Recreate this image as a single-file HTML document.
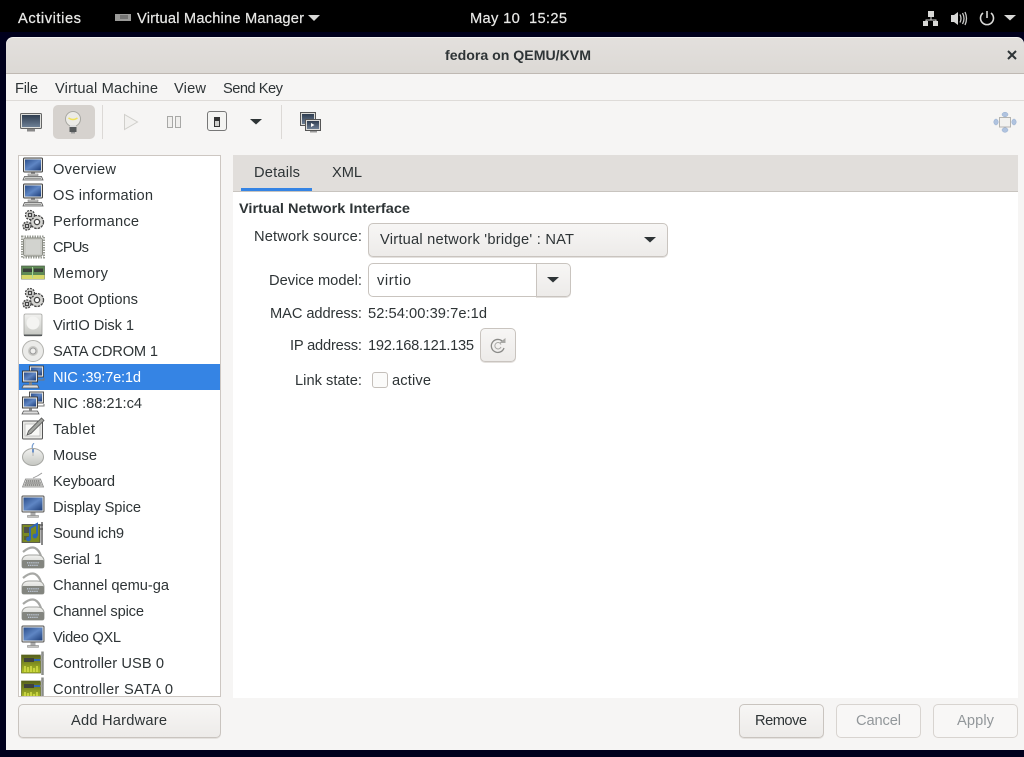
<!DOCTYPE html>
<html><head><meta charset="utf-8"><title>fedora on QEMU/KVM</title>
<style>
html,body{margin:0;padding:0;width:1024px;height:757px;overflow:hidden;background:#00001c}
div{position:absolute;box-sizing:border-box}
.btn{background:linear-gradient(#f7f6f5,#edebe9);border:1px solid #c9c4bf;border-radius:5px;box-shadow:0 1px 0 #e4e1de}
.dis{background:#f8f7f6;border:1px solid #d8d4d0;border-radius:5px}
svg{position:absolute;left:0;top:0}
text{font-family:"Liberation Sans",sans-serif;font-size:14.67px;fill:#2e3436}
</style></head><body>
<div style="left:0;top:0;width:1024px;height:32px;background:#000"></div>
<div style="left:6px;top:37px;width:1018px;height:713px;background:#f6f5f4;border-radius:7px 7px 0 0;border-top:1px solid #f3f2f1"></div>
<div style="left:6px;top:38px;width:1018px;height:36px;background:linear-gradient(#e3e0dd,#dcd9d5);border-bottom:1px solid #bfb9b3;border-radius:7px 7px 0 0"></div>
<div style="left:6px;top:100px;width:1018px;height:1px;background:#dedbd8"></div>
<div style="left:53px;top:105px;width:42px;height:34px;background:#d6d2ce;border-radius:5px"></div>
<div style="left:102px;top:105px;width:1px;height:34px;background:#dcd9d6"></div>
<div style="left:281px;top:105px;width:1px;height:34px;background:#dcd9d6"></div>
<div style="left:18px;top:155px;width:203px;height:542px;background:#fff;border:1px solid #cdc7c2"></div>
<div style="left:19px;top:364px;width:201px;height:26px;background:#3584e4"></div>
<div style="left:233px;top:155px;width:785px;height:543px;background:#fff"></div>
<div style="left:233px;top:155px;width:785px;height:37px;background:#e1dedb;border-bottom:1px solid #c8c4bf"></div>
<div style="left:241px;top:188px;width:71px;height:3px;background:#3584e4"></div>
<div class="btn" style="left:18px;top:704px;width:203px;height:34px"></div>
<div class="btn" style="left:739px;top:704px;width:85px;height:34px"></div>
<div class="dis" style="left:836px;top:704px;width:85px;height:34px"></div>
<div class="dis" style="left:933px;top:704px;width:85px;height:34px"></div>
<div class="btn" style="left:368px;top:223px;width:300px;height:34px"></div>
<div style="left:368px;top:263px;width:169px;height:34px;background:#fff;border:1px solid #c9c4bf;border-radius:5px 0 0 5px"></div>
<div class="btn" style="left:536px;top:263px;width:35px;height:34px;border-radius:0 5px 5px 0"></div>
<div class="btn" style="left:480px;top:328px;width:36px;height:34px"></div>
<div style="left:372px;top:372px;width:16px;height:16px;background:#fbfbfa;border:1px solid #c4bfba;border-radius:3px"></div>

<svg width="1024" height="757" viewBox="0 0 1024 757" xmlns="http://www.w3.org/2000/svg">
<defs>
<linearGradient id="scr" x1="0" y1="0" x2="1" y2="1"><stop offset="0" stop-color="#2c4f8c"/><stop offset=".5" stop-color="#5f86c4"/><stop offset="1" stop-color="#1d3d78"/></linearGradient>
<linearGradient id="gr" x1="0" y1="0" x2="0" y2="1"><stop offset="0" stop-color="#f2f2f0"/><stop offset="1" stop-color="#c4c6c1"/></linearGradient>
<linearGradient id="dk" x1="0" y1="0" x2="0" y2="1"><stop offset="0" stop-color="#2f3d50"/><stop offset="1" stop-color="#6d7f95"/></linearGradient>
<linearGradient id="pcb" x1="0" y1="0" x2="0" y2="1"><stop offset="0" stop-color="#55601c"/><stop offset="1" stop-color="#b3c426"/></linearGradient>
<symbol id="computer" viewBox="0 0 24 24">
<rect x="2.500" y="1" width="19" height="14" rx="1" fill="#dfe0dd" stroke="#444"/>
<rect x="4" y="2.500" width="16" height="11" fill="url(#scr)"/>
<rect x="10" y="15.500" width="4" height="2" fill="#999"/><rect x="7" y="17" width="10" height="1.500" fill="#d5d5d2" stroke="#666" stroke-width=".5"/>
<path d="M2 23l1.500-3.500h17l1.500 3.500z" fill="#dedfdc" stroke="#555" stroke-width=".8"/>
<path d="M4 21.300h16" stroke="#888"/>
</symbol>
<symbol id="gears" viewBox="0 0 24 24">
<g fill="#d6d6d3" stroke="#444" stroke-width="1.300">
<circle cx="16" cy="13" r="6.500" stroke-dasharray="2.500 1"/><circle cx="16" cy="13" r="2.600" fill="#fff"/>
<circle cx="9" cy="6" r="4.500" stroke-dasharray="2 1"/><rect x="7.500" y="4.500" width="3" height="3" fill="#fff"/>
<circle cx="6" cy="17" r="4" stroke-dasharray="2 1"/><rect x="4.500" y="15.500" width="3" height="3" fill="#fff"/>
</g></symbol>
<symbol id="cpu" viewBox="0 0 24 24">
<rect x="1" y="1.500" width="22" height="21" fill="none" stroke="#9a9c94" stroke-width="2" stroke-dasharray="1.500 1"/>
<rect x="2.500" y="3" width="19" height="18" rx="2" fill="#c9cac5" stroke="#8a8c84"/>
<rect x="5" y="5" width="14" height="14" fill="#d2d3cf"/>
</symbol>
<symbol id="mem" viewBox="0 0 24 24">
<rect x=".5" y="5" width="23" height="13" fill="#5f8a55" stroke="#4a5a48" stroke-width=".7"/>
<rect x="2" y="7.500" width="9" height="3.500" fill="#3b3f3a"/><rect x="13" y="7.500" width="9" height="3.500" fill="#3b3f3a"/>
<rect x=".5" y="14" width="23" height="4" fill="#d8d86a"/>
<path d="M11.500 6v11" stroke="#a9d89a"/>
</symbol>
<symbol id="disk" viewBox="0 0 24 24">
<rect x="3" y="1" width="18" height="22" rx="1.500" fill="url(#gr)" stroke="#a5a5a1" stroke-width=".8"/>
<ellipse cx="12" cy="10" rx="6.500" ry="6.500" fill="#f4f4f2"/><rect x="3" y="21.500" width="18" height="1.500" fill="#55585a"/>
</symbol>
<symbol id="cd" viewBox="0 0 24 24">
<circle cx="12" cy="12" r="10.500" fill="#ebebe9" stroke="#b2b2ae"/>
<circle cx="12" cy="12" r="5" fill="#c9c9c5"/><circle cx="12" cy="12" r="3" fill="#efefed" stroke="#999"/>
</symbol>
<symbol id="nic" viewBox="0 0 24 24">
<rect x="8.500" y="1" width="14" height="11" fill="#e6e6e3" stroke="#444" stroke-width=".9"/><rect x="10" y="2.500" width="11" height="8" fill="url(#scr)"/>
<rect x="1.500" y="6" width="15" height="11" fill="#e6e6e3" stroke="#333" stroke-width=".9"/><rect x="3" y="7.500" width="12" height="8" fill="url(#scr)"/>
<path d="M1 23l1.500-3h14l1.500 3z" fill="#ddd" stroke="#555" stroke-width=".8"/><rect x="8" y="17.300" width="3" height="2.500" fill="#888"/>
<path d="M17 15h6v-2" fill="none" stroke="#777"/>
</symbol>
<symbol id="tablet" viewBox="0 0 24 24">
<rect x="1.500" y="4" width="20" height="18" rx="1" fill="#e9e9e6" stroke="#555"/>
<rect x="4" y="7" width="15" height="12" fill="#f8f8f6" stroke="#aaa" stroke-width=".6"/>
<path d="M6 18l1.500-4 13-13 2.500 2.500-13 13z" fill="#a2a4a0" stroke="#555" stroke-width=".8"/>
</symbol>
<symbol id="mouse" viewBox="0 0 24 24">
<path d="M13 0q-3 3-1 7" fill="none" stroke="#7a9fd0" stroke-width="1.200"/>
<ellipse cx="12" cy="14" rx="10.500" ry="8.500" fill="url(#gr)" stroke="#a5a6a2"/>
<path d="M12 6v7" stroke="#b5b5b1"/><rect x="11" y="6" width="2" height="3.500" fill="#6d93c9"/>
</symbol>
<symbol id="kbd" viewBox="0 0 24 24">
<path d="M21 4q-4 3-9 5" fill="none" stroke="#999" stroke-width=".9"/>
<path d="M1.500 18l3-8h15l3 8z" fill="#d6d6d3" stroke="#888" stroke-width=".8"/>
<path d="M5 12h14M4.300 14h15.400M3.600 16h16.800" stroke="#666" stroke-width="1.300" stroke-dasharray="1.500 .5"/>
</symbol>
<symbol id="disp" viewBox="0 0 24 24">
<rect x="1" y="1" width="22" height="16" rx="1" fill="#e2e3e0" stroke="#555"/>
<rect x="2.500" y="2.500" width="19" height="13" fill="url(#scr)"/>
<rect x="9.500" y="17.500" width="5" height="3" fill="#aaa"/><rect x="6.500" y="20.500" width="11" height="1.800" fill="#c3c3c0" stroke="#777" stroke-width=".5"/>
</symbol>
<symbol id="sound" viewBox="0 0 24 24">
<rect x="1" y="3.500" width="18" height="18" fill="#7b8a22" stroke="#444" stroke-width=".8"/>
<rect x="3" y="6" width="6" height="6" fill="#4e524c"/><rect x="3" y="15" width="5" height="4" fill="#5c6030"/>
<path d="M9 18V7l7-4v12" fill="none" stroke="#2f66b8" stroke-width="2"/><circle cx="7.500" cy="18" r="2.400" fill="#2f66b8"/><circle cx="14" cy="15" r="2.400" fill="#2f66b8"/>
<path d="M21 1v23" stroke="#888" stroke-width="2"/><path d="M19 4h3M19 8h3" stroke="#444"/>
</symbol>
<symbol id="serial" viewBox="0 0 24 24">
<path d="M2 6Q9 0 14 2q4 2 6 8" fill="none" stroke="#a7a8a5" stroke-width="2.200"/>
<path d="M1 14q1-5 7-5h8q6 0 7 5v6q0 2-2 2H3q-2 0-2-2z" fill="url(#gr)" stroke="#a2a39f"/>
<rect x="1" y="14" width="22" height="8" rx="1.500" fill="#83857f"/>
<path d="M6 16.800h12M7 19.300h10" stroke="#c5d0e2" stroke-width="1.200" stroke-dasharray="1.300 .8"/>
</symbol>
<symbol id="ctrl" viewBox="0 0 24 24">
<rect x=".5" y="4" width="19" height="18" fill="url(#pcb)" stroke="#5c6422" stroke-width=".7"/>
<rect x="3" y="7" width="10" height="4" fill="#3f423d"/><path d="M13 9h6" stroke="#2f66b8" stroke-width="2"/>
<path d="M4 21v-6M7 21v-5M10 21v-6M13 21v-4M16 21v-6" stroke="#d7e04a" stroke-width="1.500"/>
<path d="M21.500 .5v23.500" stroke="#8b8d88" stroke-width="2.500"/><path d="M19 4h4M19 9h3" stroke="#999"/>
</symbol>
<clipPath id="lc"><rect x="19" y="156" width="201" height="540"/></clipPath>
</defs>

<!-- Top bar -->
<g>
<text x="18" y="23" textLength="63" style="fill:#e8e8e6;stroke:#e8e8e6;stroke-width:.25">Activities</text>
<rect x="115" y="14" width="16" height="7" fill="#9a9a98"/><path d="M120 16h8M120 18h8" stroke="#333" stroke-width=".8"/>
<text x="137" y="23" textLength="167" style="fill:#e8e8e6;stroke:#e8e8e6;stroke-width:.2">Virtual Machine Manager</text>
<path d="M308 15h12l-6 6z" fill="#d8d8d6"/>
<text x="470" y="23" textLength="97" xml:space="preserve" style="fill:#e8e8e6;stroke:#e8e8e6;stroke-width:.2">May 10  15:25</text>
<!-- network -->
<rect x="928" y="11" width="6" height="6" fill="#d8d8d6"/>
<path d="M930.500 17h1v2.500H936.500V21h-1v-.5H926.500V21h-1v-1.500h5z" fill="#d8d8d6"/>
<rect x="923" y="21" width="5" height="5" fill="#d8d8d6"/><rect x="933" y="21" width="5" height="5" fill="#d8d8d6"/>
<!-- volume -->
<path d="M951 15h3l4-3v13l-4-3h-3z" fill="#d8d8d6"/>
<path d="M960 14.500q2 4 0 8M962.500 13q3 5.500 0 11M965 12q3 6.500 0 13" fill="none" stroke="#c8c8c6" stroke-width="1.300"/>
<!-- power -->
<path d="M983 13a6.500 6.500 0 1 0 8 0" fill="none" stroke="#d8d8d6" stroke-width="1.600"/><path d="M987 11v7" stroke="#d8d8d6" stroke-width="1.600"/>
<path d="M1004 15h12l-6 5.500z" fill="#d8d8d6"/>
</g>

<!-- Title -->
<text x="445" y="60" textLength="146" lengthAdjust="spacingAndGlyphs" style="font-weight:bold;font-size:14px">fedora on QEMU/KVM</text>
<path d="M1008 51l8 8M1016 51l-8 8" stroke="#2e3436" stroke-width="2"/>

<!-- Menu -->
<text x="15" y="93" textLength="23">File</text>
<text x="55" y="93" textLength="103">Virtual Machine</text>
<text x="174" y="93" textLength="32">View</text>
<text x="223" y="93" textLength="60">Send Key</text>

<!-- Toolbar -->
<rect x="20.500" y="113.500" width="21" height="15" rx="1" fill="#dedfdc" stroke="#666"/>
<rect x="22" y="115" width="18" height="12" fill="url(#dk)"/>
<rect x="27" y="129" width="8" height="2.500" fill="#888"/>
<g>
<circle cx="73" cy="119" r="7.500" fill="#ecebe6" stroke="#a8a8a2"/><path d="M68.500 118q4.500 3 9 0" fill="none" stroke="#f0e25c" stroke-width="1.500"/>
<path d="M70 125h6v3h-6z" fill="#ddd"/><rect x="69.500" y="127" width="7" height="5" fill="#56595a"/><rect x="71" y="132" width="4" height="1.500" fill="#999"/>
</g>
<path d="M124.500 114.500v15l13-7.500z" fill="#f2f1ef" stroke="#d0cfcb"/>
<rect x="167.500" y="116.500" width="5" height="11" fill="#f0efed" stroke="#a8a8a6"/><rect x="175.500" y="116.500" width="5" height="11" fill="#f0efed" stroke="#a8a8a6"/>
<rect x="207.500" y="111.500" width="19" height="19" rx="2.500" fill="#f4f4f2" stroke="#777"/>
<rect x="214.500" y="117.500" width="5" height="9" fill="#cfcfcc" stroke="#333"/><rect x="215" y="118" width="4" height="3" fill="#333"/>
<path d="M250 119h12l-6 5.500z" fill="#2e3436"/>
<rect x="300.500" y="112.500" width="15" height="13" fill="#dcdcd9" stroke="#555"/><rect x="302" y="114" width="12" height="10" fill="url(#dk)"/>
<rect x="305.500" y="119.500" width="15" height="11" fill="#dcdcd9" stroke="#555"/><rect x="307" y="121" width="12" height="8" fill="url(#dk)"/>
<path d="M311 123v4l3.500-2z" fill="#fff"/><rect x="310" y="131" width="7" height="1.500" fill="#999"/>
<g fill="#b0c3df" stroke="#96aed0" stroke-width=".5">
<ellipse cx="1005" cy="114.500" rx="3" ry="2.300"/><ellipse cx="1005" cy="130" rx="3" ry="2.300"/><ellipse cx="996" cy="122" rx="2.200" ry="3"/><ellipse cx="1014" cy="122" rx="2.200" ry="3"/>
</g>
<rect x="999.500" y="117.500" width="11" height="9.500" fill="#f2f1ef" stroke="#b5b4b0"/>

<!-- Sidebar icons -->
<g clip-path="url(#lc)">
<use href="#computer" x="21" y="157" width="24" height="24"/>
<use href="#computer" x="21" y="183" width="24" height="24"/>
<use href="#gears" x="21" y="209" width="24" height="24"/>
<use href="#cpu" x="21" y="235" width="24" height="24"/>
<use href="#mem" x="21" y="261" width="24" height="24"/>
<use href="#gears" x="21" y="287" width="24" height="24"/>
<use href="#disk" x="21" y="313" width="24" height="24"/>
<use href="#cd" x="21" y="339" width="24" height="24"/>
<use href="#nic" x="21" y="365" width="24" height="24"/>
<use href="#nic" x="21" y="391" width="24" height="24"/>
<use href="#tablet" x="21" y="417" width="24" height="24"/>
<use href="#mouse" x="21" y="443" width="24" height="24"/>
<use href="#kbd" x="21" y="469" width="24" height="24"/>
<use href="#disp" x="21" y="495" width="24" height="24"/>
<use href="#sound" x="21" y="521" width="24" height="24"/>
<use href="#serial" x="21" y="546" width="24" height="24"/>
<use href="#serial" x="21" y="572" width="24" height="24"/>
<use href="#serial" x="21" y="598" width="24" height="24"/>
<use href="#disp" x="21" y="625" width="24" height="24"/>
<use href="#ctrl" x="21" y="651" width="24" height="24"/>
<use href="#ctrl" x="21" y="677" width="24" height="24"/>
</g>

<!-- Sidebar text -->
<text x="53" y="174" textLength="63">Overview</text>
<text x="53" y="200" textLength="100">OS information</text>
<text x="53" y="226" textLength="86">Performance</text>
<text x="53" y="252" textLength="36">CPUs</text>
<text x="53" y="278" textLength="55">Memory</text>
<text x="53" y="304" textLength="85">Boot Options</text>
<text x="53" y="330" textLength="81">VirtIO Disk 1</text>
<text x="53" y="356" textLength="105">SATA CDROM 1</text>
<text x="53" y="382" textLength="88" style="fill:#fff">NIC :39:7e:1d</text>
<text x="53" y="408" textLength="89">NIC :88:21:c4</text>
<text x="53" y="434" textLength="42">Tablet</text>
<text x="53" y="460" textLength="44">Mouse</text>
<text x="53" y="486" textLength="62">Keyboard</text>
<text x="53" y="512" textLength="88">Display Spice</text>
<text x="53" y="538" textLength="71">Sound ich9</text>
<text x="53" y="564" textLength="49">Serial 1</text>
<text x="53" y="590" textLength="116">Channel qemu-ga</text>
<text x="53" y="616" textLength="91">Channel spice</text>
<text x="53" y="642" textLength="68">Video QXL</text>
<text x="53" y="668" textLength="111">Controller USB 0</text>
<text x="53" y="694" textLength="120">Controller SATA 0</text>

<text x="71" y="725" textLength="96">Add Hardware</text>

<!-- Details -->
<text x="254" y="177" textLength="46">Details</text>
<text x="332" y="177" textLength="30">XML</text>
<text x="239" y="213" textLength="171" lengthAdjust="spacingAndGlyphs" style="font-weight:bold;font-size:14px">Virtual Network Interface</text>
<text x="254" y="241" textLength="108">Network source:</text>
<text x="380" y="244" textLength="194">Virtual network 'bridge' : NAT</text>
<path d="M644 237h12l-6 5.500z" fill="#2e3436"/>
<text x="269" y="285" textLength="93">Device model:</text>
<text x="377" y="285" textLength="34">virtio</text>
<path d="M547 277h12l-6 5.500z" fill="#2e3436"/>
<text x="270" y="318" textLength="92">MAC address:</text>
<text x="368" y="318" textLength="119">52:54:00:39:7e:1d</text>
<text x="290" y="350" textLength="72">IP address:</text>
<text x="368" y="350" textLength="106">192.168.121.135</text>
<path d="M503 342a6.500 6.500 0 1 0 1 6" fill="none" stroke="#8b8b88" stroke-width="1.300"/>
<path d="M501 344.500a3.200 3.200 0 1 0 0 2.500" fill="none" stroke="#a8a8a5" stroke-width="1"/>
<path d="M499 343h6.500v-5z" fill="#a8a8a5"/>
<text x="295" y="385" textLength="67">Link state:</text>
<text x="392" y="385" textLength="39">active</text>

<!-- Bottom buttons -->
<text x="755" y="725" textLength="52">Remove</text>
<text x="856" y="725" textLength="45" style="fill:#92979a">Cancel</text>
<text x="957" y="725" textLength="37" style="fill:#92979a">Apply</text>
</svg>
</body></html>
